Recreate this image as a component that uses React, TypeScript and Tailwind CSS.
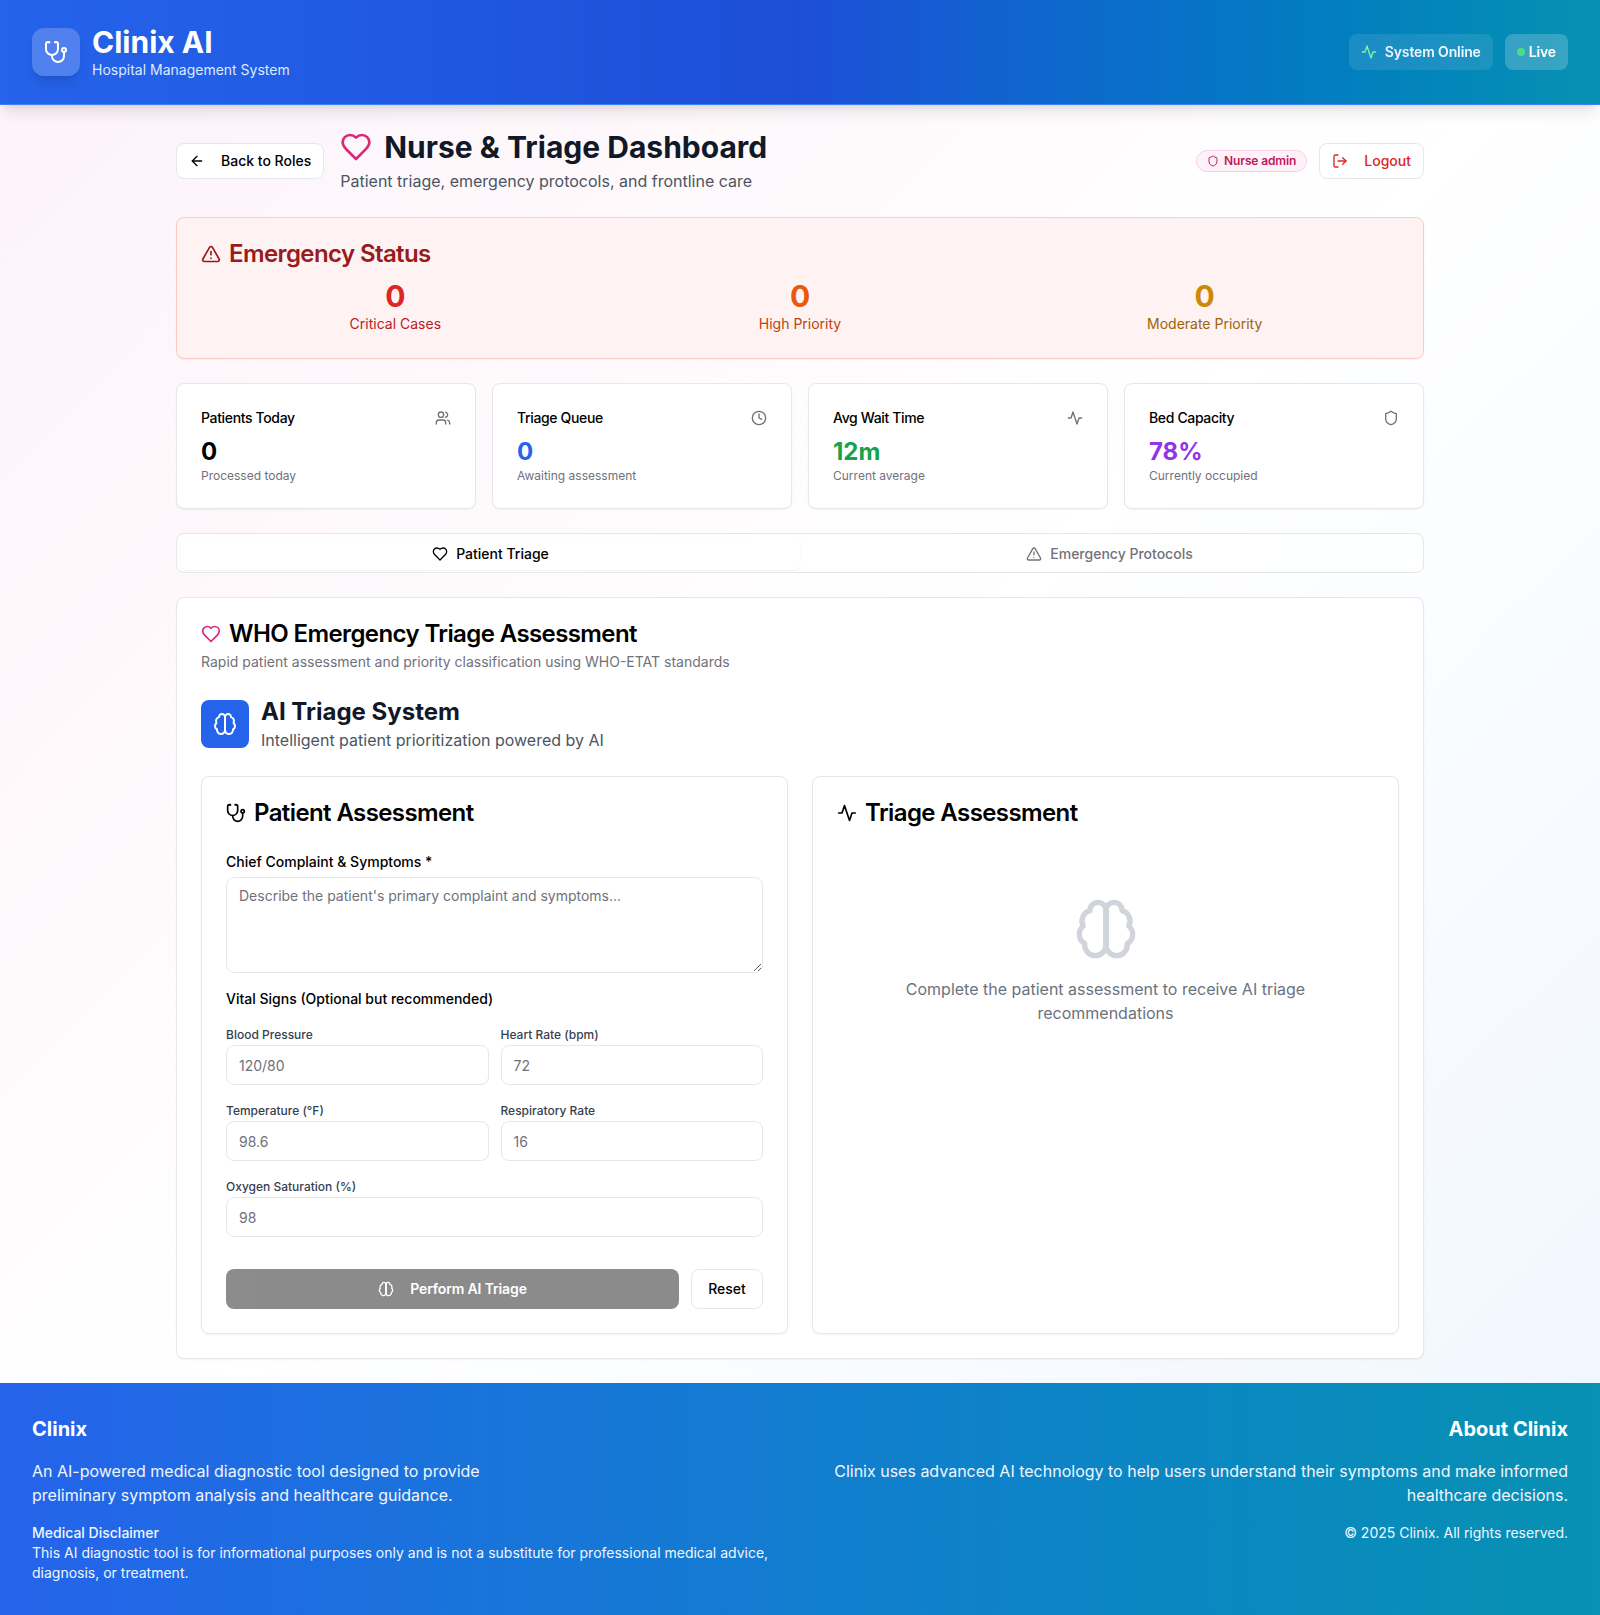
import { ArrowLeft, Clock, LogOut, Shield, TriangleAlert, Users } from "lucide-react";
import type { ReactNode } from "react";

// older lucide outlines, the bundled release redraws these
function Outline({ className, children }: { className?: string; children: ReactNode }) {
  return (
    <svg
      viewBox="0 0 24 24"
      fill="none"
      stroke="currentColor"
      strokeWidth={2}
      strokeLinecap="round"
      strokeLinejoin="round"
      className={className}
    >
      {children}
    </svg>
  );
}

function BrainIcon({ className }: { className?: string }) {
  return (
    <Outline className={className}>
      <path d="M12 5a3 3 0 1 0-5.997.125 4 4 0 0 0-2.526 5.77 4 4 0 0 0 .556 6.588A4 4 0 1 0 12 18Z" />
      <path d="M12 5a3 3 0 1 1 5.997.125 4 4 0 0 1 2.526 5.77 4 4 0 0 1-.556 6.588A4 4 0 1 1 12 18Z" />
      <path d="M12 5v13" />
    </Outline>
  );
}

function HeartIcon({ className }: { className?: string }) {
  return (
    <Outline className={className}>
      <path d="M19 14c1.49-1.46 3-3.21 3-5.5A5.5 5.5 0 0 0 16.5 3c-1.76 0-3 .5-4.5 2-1.5-1.5-2.74-2-4.5-2A5.5 5.5 0 0 0 2 8.5c0 2.3 1.5 4.05 3 5.5l7 7Z" />
    </Outline>
  );
}

function ActivityIcon({ className }: { className?: string }) {
  return (
    <Outline className={className}>
      <path d="M22 12h-4l-3 9L9 3l-3 9H2" />
    </Outline>
  );
}

function StethoscopeIcon({ className }: { className?: string }) {
  return (
    <Outline className={className}>
      <path d="M4.8 2.3A.3.3 0 1 0 5 2H4a2 2 0 0 0-2 2v5a6 6 0 0 0 6 6a6 6 0 0 0 6-6V4a2 2 0 0 0-2-2h-1a.2.2 0 1 0 .3.3" />
      <path d="M8 15v1a6 6 0 0 0 6 6a6 6 0 0 0 6-6v-4" />
      <circle cx="20" cy="10" r="2" />
    </Outline>
  );
}

const STATS = [
  { title: "Patients Today", value: "0", sub: "Processed today", color: "text-black", Icon: Users },
  { title: "Triage Queue", value: "0", sub: "Awaiting assessment", color: "text-[#2563eb]", Icon: Clock },
  { title: "Avg Wait Time", value: "12m", sub: "Current average", color: "text-[#16a34a]", Icon: ActivityIcon },
  { title: "Bed Capacity", value: "78%", sub: "Currently occupied", color: "text-[#9333ea]", Icon: Shield },
];

const CARD_SHADOW = "shadow-[0_1px_2px_0_rgba(0,0,0,0.05)]";

function VitalField({ label, placeholder }: { label: string; placeholder: string }) {
  return (
    <div>
      <label className="mb-0.5 block text-xs leading-4 font-medium text-[#374151]">{label}</label>
      <input
        placeholder={placeholder}
        className="h-10 w-full rounded-lg border border-[#e5e7eb] bg-white px-3 text-sm placeholder:text-[#71717a]"
      />
    </div>
  );
}

export default function App() {
  return (
    <div className="min-h-screen bg-gradient-to-br from-[#fdf2f8] via-white to-[#eff6ff] font-['Inter',sans-serif] text-black">
      <header className="relative flex h-[105px] items-center justify-between border-b border-[#3b82f6] bg-gradient-to-r from-[#2563eb] via-[#1d4ed8] to-[#0891b2] px-8 shadow-lg">
        <div className="flex items-center gap-3">
          <div className="flex h-12 w-12 items-center justify-center rounded-xl bg-white/20 text-white shadow-lg">
            <StethoscopeIcon className="h-6 w-6" />
          </div>
          <div>
            <h1 className="text-3xl font-bold text-white">Clinix AI</h1>
            <p className="text-sm text-[#dbeafe]">Hospital Management System</p>
          </div>
        </div>
        <div className="flex items-center gap-3">
          <div className="flex h-9 items-center gap-2 rounded-lg bg-white/10 px-3 text-sm font-semibold tracking-[-0.01em] text-[#eff6ff] backdrop-blur-sm">
            <ActivityIcon className="h-4 w-4 text-[#86efac]" />
            System Online
          </div>
          <div className="flex h-9 items-center gap-1 rounded-lg bg-white/20 px-3 text-sm font-semibold tracking-[-0.01em] text-white backdrop-blur-sm">
            <span className="h-2 w-2 rounded-full bg-[#4ade80]" />
            Live
          </div>
        </div>
      </header>

      <main className="mx-auto max-w-7xl px-4 py-6">
        <div className="mb-6 flex items-center justify-between">
          <div className="flex items-center gap-4">
            <button className="flex h-9 items-center gap-4 rounded-lg border border-[#e5e7eb] bg-white px-3 text-sm font-medium">
              <ArrowLeft className="h-4 w-4" />
              Back to Roles
            </button>
            <div>
              <div className="flex items-center gap-3">
                <HeartIcon className="h-8 w-8 text-[#db2777]" />
                <h2 className="text-3xl font-bold text-[#111827]">Nurse &amp; Triage Dashboard</h2>
              </div>
              <p className="mt-1 text-[#4b5563]">Patient triage, emergency protocols, and frontline care</p>
            </div>
          </div>
          <div className="flex items-center gap-3">
            <span className="flex h-[22px] items-center gap-[5px] rounded-full border border-[#fbcfe8] bg-[#fdf2f8] px-[10px] text-xs font-semibold tracking-[-0.01em] text-[#be185d]">
              <Shield className="h-3 w-3" />
              Nurse admin
            </span>
            <button className="flex h-9 items-center gap-4 rounded-lg border border-[#e5e7eb] bg-white px-3 text-sm font-medium text-[#dc2626]">
              <LogOut className="h-4 w-4" />
              Logout
            </button>
          </div>
        </div>

        <section className={`mb-6 rounded-lg border border-[#fecaca] bg-[#fef2f2] px-6 pt-5 pb-6 ${CARD_SHADOW}`}>
          <h3 className="mb-2 flex items-center gap-2 text-2xl font-semibold tracking-tight text-[#991b1b]">
            <TriangleAlert className="h-5 w-5" />
            Emergency Status
          </h3>
          <div className="grid grid-cols-3 gap-4 text-center">
            <div>
              <div className="text-3xl font-bold text-[#dc2626]">0</div>
              <div className="text-sm text-[#b91c1c]">Critical Cases</div>
            </div>
            <div>
              <div className="text-3xl font-bold text-[#ea580c]">0</div>
              <div className="text-sm text-[#c2410c]">High Priority</div>
            </div>
            <div>
              <div className="text-3xl font-bold text-[#ca8a04]">0</div>
              <div className="text-sm text-[#a16207]">Moderate Priority</div>
            </div>
          </div>
        </section>

        <div className="mb-6 grid grid-cols-4 gap-4">
          {STATS.map(({ title, value, sub, color, Icon }) => (
            <div key={title} className={`rounded-lg border border-[#e5e7eb] bg-white p-6 ${CARD_SHADOW}`}>
              <div className="mb-2 flex items-center justify-between">
                <span className="text-sm font-medium tracking-tight">{title}</span>
                <Icon className="h-4 w-4 text-[#71717a]" />
              </div>
              <div className={`text-2xl font-bold ${color}`}>{value}</div>
              <div className="text-xs text-[#71717a]">{sub}</div>
            </div>
          ))}
        </div>

        <div className="mb-6 grid h-10 grid-cols-2 rounded-lg border border-[#e5e7eb] bg-white/80 px-1 pt-1 pb-[2px]">
          <div className={`flex items-center justify-center gap-2 rounded-md bg-white text-sm font-medium ${CARD_SHADOW}`}>
            <HeartIcon className="h-4 w-4" />
            Patient Triage
          </div>
          <div className="flex items-center justify-center gap-2 text-sm font-medium text-[#71717a]">
            <TriangleAlert className="h-4 w-4" />
            Emergency Protocols
          </div>
        </div>

        <section className={`rounded-lg border border-[#e5e7eb] bg-white px-6 pt-5 pb-6 ${CARD_SHADOW}`}>
          <h3 className="flex items-center gap-2 text-2xl font-semibold tracking-tight">
            <HeartIcon className="h-5 w-5 text-[#db2777]" />
            WHO Emergency Triage Assessment
          </h3>
          <p className="mt-0.5 text-sm text-[#71717a]">
            Rapid patient assessment and priority classification using WHO-ETAT standards
          </p>

          <div className="my-6 flex items-center gap-3">
            <div className="flex h-12 w-12 items-center justify-center rounded-lg bg-[#2563eb] text-white">
              <BrainIcon className="h-6 w-6" />
            </div>
            <div>
              <h4 className="text-2xl font-bold text-[#111827]">AI Triage System</h4>
              <p className="text-[#4b5563]">Intelligent patient prioritization powered by AI</p>
            </div>
          </div>

          <div className="grid grid-cols-2 gap-6">
            <div className={`rounded-lg border border-[#e5e7eb] bg-white px-6 pt-5 pb-6 ${CARD_SHADOW}`}>
              <h4 className="mb-[23px] flex items-center gap-2 text-2xl font-semibold tracking-tight">
                <StethoscopeIcon className="h-5 w-5" />
                Patient Assessment
              </h4>
              <label className="mb-[5px] block text-sm font-medium">Chief Complaint &amp; Symptoms *</label>
              <textarea
                placeholder="Describe the patient's primary complaint and symptoms..."
                className="block h-[96px] w-full rounded-lg border border-[#e5e7eb] bg-white px-3 py-2 text-sm placeholder:text-[#71717a]"
              />
              <div className="mt-4 mb-[18px] text-sm font-medium">Vital Signs (Optional but recommended)</div>
              <div className="grid grid-cols-2 gap-x-3 gap-y-[18px]">
                <VitalField label="Blood Pressure" placeholder="120/80" />
                <VitalField label="Heart Rate (bpm)" placeholder="72" />
                <VitalField label="Temperature (°F)" placeholder="98.6" />
                <VitalField label="Respiratory Rate" placeholder="16" />
                <div className="col-span-2">
                  <VitalField label="Oxygen Saturation (%)" placeholder="98" />
                </div>
              </div>
              <div className="mt-8 flex gap-3">
                <button className="flex h-10 flex-1 items-center justify-center gap-4 rounded-lg bg-[#1a1a1a] text-sm font-semibold tracking-[-0.01em] text-white opacity-50">
                  <BrainIcon className="h-4 w-4" />
                  Perform AI Triage
                </button>
                <button className="h-10 w-[72px] rounded-lg border border-[#e5e7eb] bg-white text-sm font-medium">
                  Reset
                </button>
              </div>
            </div>

            <div className={`rounded-lg border border-[#e5e7eb] bg-white px-6 pt-5 pb-6 ${CARD_SHADOW}`}>
              <h4 className="flex items-center gap-2 text-2xl font-semibold tracking-tight">
                <ActivityIcon className="h-5 w-5" />
                Triage Assessment
              </h4>
              <div className="mt-[68px] flex flex-col items-center text-center">
                <BrainIcon className="mb-4 h-16 w-16 text-[#d1d5db]" />
                <p className="max-w-md text-[#6b7280]">
                  Complete the patient assessment to receive AI triage recommendations
                </p>
              </div>
            </div>
          </div>
        </section>
      </main>

      <footer className="grid grid-cols-2 gap-8 bg-gradient-to-r from-[#2563eb] to-[#0891b2] px-8 py-8 text-white">
        <div>
          <h3 className="mb-4 text-xl font-bold">Clinix</h3>
          <p className="mb-4 max-w-md text-[#eff6ff]">
            An AI-powered medical diagnostic tool designed to provide preliminary symptom analysis and healthcare
            guidance.
          </p>
          <div className="text-sm text-[#eff6ff]">
            <div className="font-medium">Medical Disclaimer</div>
            <p>
              This AI diagnostic tool is for informational purposes only and is not a substitute for professional
              medical advice, diagnosis, or treatment.
            </p>
          </div>
        </div>
        <div className="text-right">
          <h3 className="mb-4 text-xl font-bold">About Clinix</h3>
          <p className="mb-4 text-[#eff6ff]">
            Clinix uses advanced AI technology to help users understand their symptoms and make informed healthcare
            decisions.
          </p>
          <p className="text-sm text-[#eff6ff]">© 2025 Clinix. All rights reserved.</p>
        </div>
      </footer>
    </div>
  );
}
